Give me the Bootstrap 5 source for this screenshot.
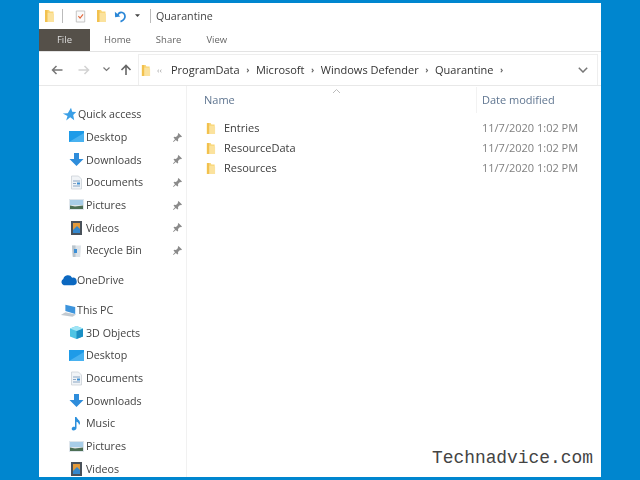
<!DOCTYPE html>
<html lang="en"><head><meta charset="utf-8"><title>Quarantine</title>
<link rel="stylesheet" href="https://cdn.jsdelivr.net/npm/bootstrap@5.3.0/dist/css/bootstrap.min.css">
<style>
html,body{height:480px;overflow:hidden}
body{background:#0086cf;font-family:"Open Sans","Noto Sans",sans-serif;font-size:11px;color:#3a3a3a}
.win{width:562px;height:474px;margin:3px 0 0 39px;background:#fff;position:relative;overflow:hidden}
.soft{filter:blur(.35px)}
.defs{position:absolute}
.titlebar{height:26px;padding-left:5px;font-size:10.7px}
.sep{width:1px;height:14px;background:#bbb;flex:none}
.tabs{height:23px;border-bottom:1px solid #e3e3e3;color:#666;font-size:9.5px}
.tabfile{width:51px;height:22px;background:#555049;color:#ddd;display:flex;align-items:center;justify-content:center}
.tabset{gap:25px;margin-left:14px;padding-top:1px}
.addrrow{height:32px;margin-top:2px;border-bottom:1px solid #e8e8e8}
.navarea{width:51px;padding-left:12px;gap:15px;flex:none}
.navdrop{margin-left:13px;flex:none}
.navup{margin-left:10px;margin-right:6px;flex:none}
.addr{flex:1;height:31px;border:1px solid #eee;border-width:1px 1px 0;padding-left:2px;margin-right:3px;font-size:11px;color:#333}
.crumbs{gap:6.5px}
.backs{color:#999;font-size:8px;width:8px;margin-left:6px;margin-right:6px}
.chev{color:#666;font-size:9px;font-weight:700}
.main{height:394px}
.side{width:148px;border-right:1px solid #f1f1f1;padding-top:17px;font-size:10.7px;color:#444;flex:none}
.srow{height:22.65px;position:relative}
.lvl1{padding-left:23px;gap:1px}
.lvl2{padding-left:30px;gap:2px}
.lvlroot{padding-left:21px}
.gapafter{margin-top:7.4px}
.ic{width:15px;height:15px;flex:none}
.icfold{width:11px;height:14px;flex:none}
.pinic{position:absolute;left:133px;top:6px;width:11px;height:11px}
.listing{flex:1;position:relative}
.headrow{height:28px;margin-bottom:4px;padding-left:17px;color:#5f7590;font-size:11px}
.colname{width:272px}
.coldate{padding-left:5px;height:26px;border-left:1px solid #f2f2f2;display:flex;align-items:center}
.frow{height:20px;padding-left:19px}
.fname{width:276px;display:flex;gap:8px;align-items:center;color:#3c3c3c}
.fdate{color:#808080}
.caret{position:absolute;left:145px;top:2px;width:9px;height:6px}
.wm{position:absolute;right:8px;bottom:10px;background:#fff;font-family:"Liberation Mono",monospace;font-size:17.9px;color:#444;line-height:18px}
</style></head><body>
<svg width="0" height="0" class="defs"><defs>
<symbol id="fold" viewBox="0 0 11 14"><path d="M1 1h4l1 1.500h3.500V13H1z" fill="#f9d677"/><path d="M1 4h7l2 1v8H1z" fill="#fbe29d"/><path d="M1 1h2.500v12H1z" fill="#f2c14e"/></symbol>
<symbol id="star" viewBox="0 0 15 15"><path d="M9 .8l1.200 3.900 4 .3-3 3 1 5.200-4-3-4 3.300 1.300-4.400L.8 6.500l5-.2z" fill="#3a9fe6"/></symbol>
<symbol id="desk" viewBox="0 0 15 15"><rect x="0" y="2" width="15" height="11" fill="#1e9be8"/><path d="M0 13l15-9v9z" fill="#49b2f0"/></symbol>
<symbol id="down" viewBox="0 0 15 15"><path d="M5 1h5v6h4.500L7.500 14 .5 7H5z" fill="#2f8ddb"/></symbol>
<symbol id="docs" viewBox="0 0 15 15"><path d="M2.500 1h7l3 3v10h-10z" fill="#f1f4f7" stroke="#c6ccd2" stroke-width=".7"/><path d="M4 6h7M4 8.500h3M4 11h7" stroke="#8aa6c4"/><rect x="8" y="7.500" width="3" height="2" fill="#3d8fd4"/></symbol>
<symbol id="pics" viewBox="0 0 15 15"><rect y="2" width="15" height="11" fill="#dfe6ec"/><rect x="1" y="3" width="13" height="5" fill="#a8cde8"/><path d="M1 12V8.500l5 1 8-1V12z" fill="#4d6f55"/></symbol>
<symbol id="vids" viewBox="0 0 15 15"><rect x="2" y="1" width="11" height="14" fill="#49515a"/><rect x="4" y="3" width="7" height="10" fill="#e39a3b"/><path d="M4 10l4-4 3 3v4H4z" fill="#3487cc"/></symbol>
<symbol id="bin" viewBox="0 0 15 15"><path d="M3 2.500h9l-.8 11.500H3.800z" fill="#dde3e8"/><path d="M3 2.500h3.500V14H3.800z" fill="#b9c4cc"/><rect x="5" y="6" width="3" height="4" fill="#3c8fd6"/></symbol>
<symbol id="pin" viewBox="0 0 11 11"><path d="M6.500 1l3.500 3.500-1 .7-1-.2L6 7l.2 1.800-.8.7L3.800 8 1.500 10 1 9.500 3 7.200 1.500 5.500l.8-.7L4 5l2-2-.2-1z" fill="#8b8b8b"/></symbol>
<symbol id="cloud" viewBox="0 0 18 12"><path d="M4 11.500A3.500 3.500 0 0 1 3.500 5 5 5 0 0 1 12.800 3.600 4 4 0 0 1 14.500 11.500z" fill="#0c68c0"/></symbol>
<symbol id="pc" viewBox="0 0 19 15"><path d="M6 1l11 2.500v8L6 8z" fill="#3d94dc"/><path d="M1 12.500l5-3 12 2.500-4 2.500z" fill="#c3cad0"/></symbol>
<symbol id="cube" viewBox="0 0 15 15"><path d="M7.500 1L14 3.500v8L7.500 14 1 11.500v-8z" fill="#4ec4e4"/><path d="M7.500 6L14 3.500v8L7.500 14z" fill="#1a8fc4"/><path d="M1 3.500L7.500 1 14 3.500 7.500 6z" fill="#a2e5f5"/></symbol>
<symbol id="note" viewBox="0 0 15 15"><path d="M6 1h1.500c.3 2 3.500 3 3.500 6 0 1-.5 1.500-1 2 0-2-1.500-3-2.500-3.300V12c0 1.600-1.500 2.500-3 2.500S2.500 13.500 2.800 12.300 4.500 10.500 6 11z" fill="#2d90dc"/></symbol>
</defs></svg>
<div class="win">
 <div class="titlebar soft d-flex align-items-center">
  <svg class="icfold"><use href="#fold"/></svg>
  <span class="sep" style="margin-left:7px"></span>
  <svg style="margin-left:12px" width="11" height="15" viewBox="0 0 13 15"><path d="M1.500 1h10v13h-10z" fill="#fafafa" stroke="#bbb"/><path d="M4 7l2 2.500L9.500 5" stroke="#e0663a" stroke-width="1.300" fill="none"/></svg>
  <svg style="margin-left:10px" width="11" height="14"><use href="#fold"/></svg>
  <svg style="margin-left:7px" width="13" height="14" viewBox="0 0 15 15"><path d="M4 7.500C5 4 7.500 3 9.500 3.500c3 .8 4 4.500 2.500 7S9 13.500 7.500 14" fill="none" stroke="#2a86d6" stroke-width="2"/><path d="M1 2.500l.3 6.500 6-1z" fill="#2a86d6"/></svg>
  <svg style="margin-left:8px" width="5" height="4" viewBox="0 0 7 5"><path d="M0 0h7L3.500 4z" fill="#444"/></svg>
  <span class="sep" style="margin-left:10px"></span>
  <span style="margin-left:5px;color:#444">Quarantine</span>
 </div>
 <div class="tabs soft d-flex align-items-start">
  <div class="tabfile">File</div>
  <div class="tabset d-flex align-items-center h-100"><div>Home</div><div>Share</div><div>View</div></div>
 </div>
 <div class="addrrow soft d-flex align-items-center">
  <div class="navarea d-flex align-items-center">
   <svg width="12" height="10" viewBox="0 0 12 10"><path d="M11.500 5H2M5.500 1L1.500 5l4 4" fill="none" stroke="#777" stroke-width="1.500"/></svg>
   <svg width="12" height="10" viewBox="0 0 12 10"><path d="M.5 5H10M6.500 1l4 4-4 4" fill="none" stroke="#d2d2d2" stroke-width="1.500"/></svg>
  </div>
  <svg class="navdrop" width="7" height="5" viewBox="0 0 7 5"><path d="M.5.500l3 3 3-3" fill="none" stroke="#777" stroke-width="1.200"/></svg>
  <svg class="navup" width="12" height="12" viewBox="0 0 12 12"><path d="M6 11V1.500M1.500 6L6 1.500 10.500 6" fill="none" stroke="#666" stroke-width="1.600"/></svg>
  <div class="addr d-flex align-items-center">
   <svg width="10" height="13"><use href="#fold"/></svg>
   <span class="backs">&#8249;&#8249;</span>
   <div class="crumbs d-flex align-items-center"><span>ProgramData</span><span class="chev">&#8250;</span><span>Microsoft</span><span class="chev">&#8250;</span><span>Windows Defender</span><span class="chev">&#8250;</span><span>Quarantine</span><span class="chev">&#8250;</span></div>
   <svg class="ms-auto" style="margin-right:9px" width="10" height="6" viewBox="0 0 10 6"><path d="M.8.800L5 5 9.200.800" fill="none" stroke="#777" stroke-width="1.500"/></svg>
  </div>
 </div>
 <div class="main soft d-flex">
  <div class="side">
   <div class="srow lvl1 d-flex align-items-center"><svg class="ic"><use href="#star"/></svg>Quick access</div>
   <div class="srow lvl2 d-flex align-items-center"><svg class="ic"><use href="#desk"/></svg>Desktop<svg class="pinic"><use href="#pin"/></svg></div>
   <div class="srow lvl2 d-flex align-items-center"><svg class="ic"><use href="#down"/></svg>Downloads<svg class="pinic"><use href="#pin"/></svg></div>
   <div class="srow lvl2 d-flex align-items-center"><svg class="ic"><use href="#docs"/></svg>Documents<svg class="pinic"><use href="#pin"/></svg></div>
   <div class="srow lvl2 d-flex align-items-center"><svg class="ic"><use href="#pics"/></svg>Pictures<svg class="pinic"><use href="#pin"/></svg></div>
   <div class="srow lvl2 d-flex align-items-center"><svg class="ic"><use href="#vids"/></svg>Videos<svg class="pinic"><use href="#pin"/></svg></div>
   <div class="srow lvl2 d-flex align-items-center"><svg class="ic"><use href="#bin"/></svg>Recycle Bin<svg class="pinic"><use href="#pin"/></svg></div>
   <div class="srow lvlroot gapafter d-flex align-items-center"><svg width="17" height="12"><use href="#cloud"/></svg>OneDrive</div>
   <div class="srow lvlroot gapafter d-flex align-items-center"><svg width="17" height="15"><use href="#pc"/></svg>This PC</div>
   <div class="srow lvl2 d-flex align-items-center"><svg class="ic"><use href="#cube"/></svg>3D Objects</div>
   <div class="srow lvl2 d-flex align-items-center"><svg class="ic"><use href="#desk"/></svg>Desktop</div>
   <div class="srow lvl2 d-flex align-items-center"><svg class="ic"><use href="#docs"/></svg>Documents</div>
   <div class="srow lvl2 d-flex align-items-center"><svg class="ic"><use href="#down"/></svg>Downloads</div>
   <div class="srow lvl2 d-flex align-items-center"><svg class="ic"><use href="#note"/></svg>Music</div>
   <div class="srow lvl2 d-flex align-items-center"><svg class="ic"><use href="#pics"/></svg>Pictures</div>
   <div class="srow lvl2 d-flex align-items-center"><svg class="ic"><use href="#vids"/></svg>Videos</div>
  </div>
  <div class="listing">
   <svg class="caret" viewBox="0 0 9 6"><path d="M1 5l3.500-3.500L8 5" fill="none" stroke="#bbb"/></svg>
   <div class="headrow d-flex align-items-center"><div class="colname">Name</div><div class="coldate">Date modified</div></div>
   <div class="frow d-flex align-items-center"><div class="fname"><svg width="10" height="13"><use href="#fold"/></svg>Entries</div><div class="fdate">11/7/2020 1:02 PM</div></div>
   <div class="frow d-flex align-items-center"><div class="fname"><svg width="10" height="13"><use href="#fold"/></svg>ResourceData</div><div class="fdate">11/7/2020 1:02 PM</div></div>
   <div class="frow d-flex align-items-center"><div class="fname"><svg width="10" height="13"><use href="#fold"/></svg>Resources</div><div class="fdate">11/7/2020 1:02 PM</div></div>
  </div>
 </div>
 <div class="wm">Technadvice.com</div>
</div>
</body></html>
